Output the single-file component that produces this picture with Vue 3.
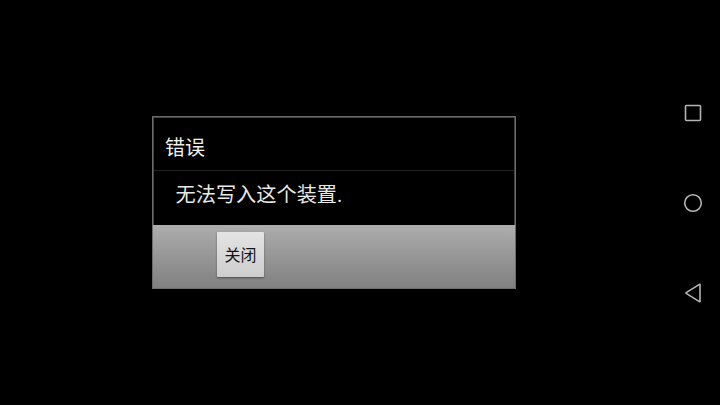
<script setup>
</script>

<template>
  <div class="screen">
    <main class="stage">
      <section class="dialog">
        <div class="inner">
          <header class="title">错误</header>
          <div class="body">无法写入这个装置.</div>
          <footer class="actions">
            <button class="btn">关闭</button>
          </footer>
        </div>
      </section>
    </main>
    <nav class="navbar">
      <svg class="icon" width="24" height="24" viewBox="0 0 24 24">
        <rect x="4.5" y="4.5" width="15" height="15" rx="1" fill="none" stroke="#b4b4b4" stroke-width="1.6" />
      </svg>
      <svg class="icon" width="24" height="24" viewBox="0 0 24 24">
        <circle cx="12" cy="12" r="8.3" fill="none" stroke="#b4b4b4" stroke-width="1.6" />
      </svg>
      <svg class="icon" width="24" height="24" viewBox="0 0 24 24">
        <path d="M19 3.5 V20.5 Q19 21 18.4 20.6 L5.2 12.4 Q4.6 12 5.2 11.6 L18.4 3.4 Q19 3 19 3.5 Z" fill="none" stroke="#b4b4b4" stroke-width="1.6" />
      </svg>
    </nav>
  </div>
</template>

<style scoped>
.screen {
  width: 720px;
  height: 405px;
  background: #000;
  display: flex;
  overflow: hidden;
  font-family: "Roboto", "Noto Sans CJK SC", sans-serif;
}
.stage {
  width: 666px;
  padding: 116px 0 0 152px;
  box-sizing: border-box;
}
.dialog {
  width: 364px;
  height: 173px;
  box-sizing: border-box;
  border: 1px solid #6c6c6c;
  background: #000;
}
.inner {
  height: 100%;
  box-sizing: border-box;
  border: 1px solid #444;
  display: flex;
  flex-direction: column;
}
.title {
  height: 53px;
  box-sizing: border-box;
  padding: 16px 0 0 11px;
  font-size: 20px;
  line-height: 28px;
  color: #f0f0f0;
  border-bottom: 1px solid #242424;
}
.body {
  height: 54px;
  box-sizing: border-box;
  padding: 10px 0 0 21.5px;
  font-size: 20.2px;
  line-height: 28px;
  color: #e8e8e8;
}
.actions {
  flex: 1;
  margin: 0 -1px -1px;
  background: linear-gradient(#adadad, #808080);
  padding: 7px 0 0 64px;
}
.btn {
  display: block;
  width: 47px;
  height: 45px;
  padding: 0 0 2px;
  border: 0;
  border-radius: 1px;
  background: linear-gradient(#e4e4e4, #cdcdcd);
  box-shadow: 0 1px 2px rgba(0, 0, 0, 0.45);
  color: #141414;
  font-family: inherit;
  font-size: 16px;
}
.navbar {
  flex: 1;
  height: 405px;
  box-sizing: border-box;
  padding-top: 101px;
  display: flex;
  flex-direction: column;
  align-items: center;
  gap: 66px;
}
.icon {
  display: block;
}
</style>
